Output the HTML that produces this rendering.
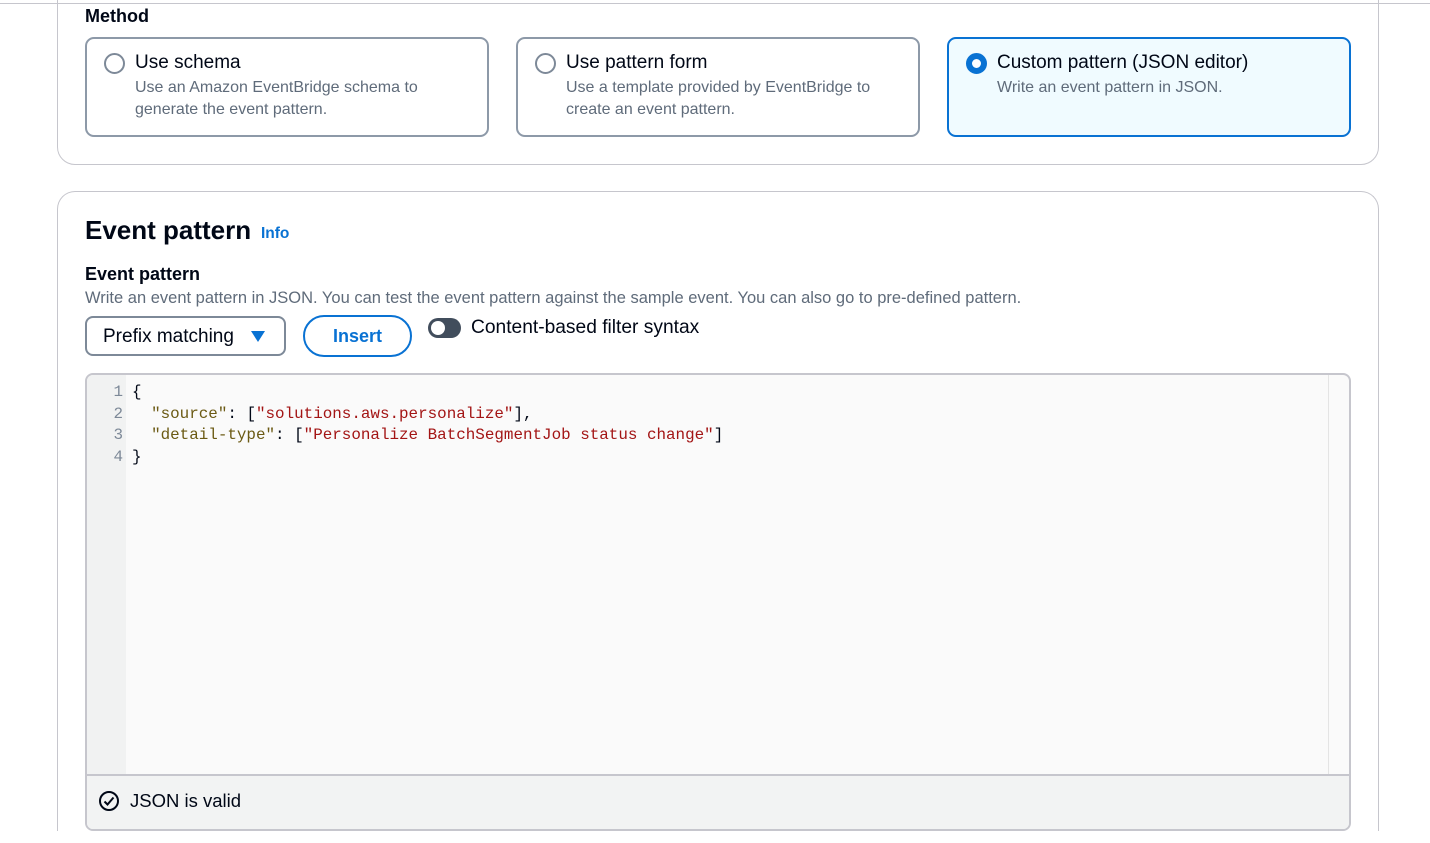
<!DOCTYPE html>
<html><head><meta charset="utf-8"><style>
*{box-sizing:border-box;margin:0;padding:0}
html{height:843px;overflow:hidden}
body{width:1430px;height:843px;overflow:hidden;background:#fff;font-family:"Liberation Sans",sans-serif;color:#000716;position:relative}
.a{position:absolute}
.card{position:absolute;border:2px solid #8d99a8;border-radius:9px;background:#fff}
.card.sel{border-color:#0972d3;background:#f0fbff}
.rad{position:absolute;left:17px;top:14px;width:21px;height:21px;border-radius:50%;border:2px solid #7d8998;background:#fff}
.sel .rad{border:6px solid #0972d3}
.t{position:absolute;left:48px;top:13px;font-size:19px;white-space:nowrap}
.d{position:absolute;left:48px;top:38px;font-size:16px;color:#5f6b7a;line-height:21.5px;white-space:nowrap}
.code{font-family:"Liberation Mono",monospace;font-size:15.9px;line-height:21.5px;white-space:pre}
.k{color:#6b5a14}.s{color:#a31515}
</style></head><body>
<div class="a" style="left:0;top:3px;width:1430px;height:1px;background:#c6c6cd"></div>
<div class="a" style="left:57px;top:-20px;width:1322px;height:185px;border:1px solid #c6c6cd;border-radius:18px"></div>
<div class="a" style="left:85px;top:6px;font-size:18px;font-weight:bold">Method</div>
<div class="card" style="left:85px;top:37px;width:404px;height:100px"><div class="rad"></div><div class="t">Use schema</div><div class="d">Use an Amazon EventBridge schema to<br>generate the event pattern.</div></div>
<div class="card" style="left:516px;top:37px;width:404px;height:100px"><div class="rad"></div><div class="t">Use pattern form</div><div class="d">Use a template provided by EventBridge to<br>create an event pattern.</div></div>
<div class="card sel" style="left:947px;top:37px;width:404px;height:100px"><div class="rad"></div><div class="t">Custom pattern (JSON editor)</div><div class="d">Write an event pattern in JSON.</div></div>

<div class="a" style="left:57px;top:191px;width:1322px;height:640px;border:1px solid #c6c6cd;border-bottom:none;border-radius:18px 18px 0 0"></div>
<div class="a" style="left:85px;top:215px;font-size:26px;font-weight:bold">Event pattern</div>
<div class="a" style="left:261px;top:225px;font-size:15.5px;font-weight:bold;color:#0972d3">Info</div>
<div class="a" style="left:85px;top:264px;font-size:18px;font-weight:bold">Event pattern</div>
<div class="a" style="left:85px;top:289px;font-size:16.5px;color:#5f6b7a;white-space:nowrap">Write an event pattern in JSON. You can test the event pattern against the sample event. You can also go to pre-defined pattern.</div>
<div class="a" style="left:85px;top:316px;width:201px;height:40px;border:2px solid #7d8998;border-radius:8px"><div class="a" style="left:16px;top:8px;font-size:19px;white-space:nowrap">Prefix matching</div><div class="a" style="left:164px;top:13px;width:0;height:0;border-left:7px solid transparent;border-right:7px solid transparent;border-top:11px solid #0972d3"></div></div>
<div class="a" style="left:303px;top:315px;width:109px;height:42px;border:2px solid #0972d3;border-radius:21px;color:#0972d3;font-weight:bold;font-size:18px;text-align:center;line-height:38px">Insert</div>
<div class="a" style="left:428px;top:318px;width:33px;height:20px;border-radius:10px;background:#414d5c"><div class="a" style="left:3px;top:3px;width:14px;height:14px;border-radius:50%;background:#fff"></div></div>
<div class="a" style="left:471px;top:317px;font-size:19.2px;white-space:nowrap">Content-based filter syntax</div>

<div class="a" style="left:85px;top:373px;width:1266px;height:458px;border:2px solid #c6c6cd;border-radius:8px;overflow:hidden;background:#fafafa">
 <div class="a" style="left:0;top:0;width:39px;height:400px;background:#f1f2f2"></div>
 <div class="a" style="left:1241px;top:0;width:1px;height:400px;background:#e4e4e4"></div>
 <div class="a code" style="left:0;top:7px;width:36px;text-align:right;color:#7d8998">1
2
3
4</div>
 <div class="a code" style="left:45px;top:7px">{
  <span class="k">"source"</span>: [<span class="s">"solutions.aws.personalize"</span>],
  <span class="k">"detail-type"</span>: [<span class="s">"Personalize BatchSegmentJob status change"</span>]
}</div>
 <div class="a" style="left:0;top:399px;width:1266px;height:60px;background:#f2f3f3;border-top:2px solid #c6c6cd">
  <svg class="a" style="left:11px;top:14px" width="22" height="22" viewBox="0 0 22 22"><circle cx="11" cy="11" r="9" fill="none" stroke="#000716" stroke-width="2"/><path d="M6.5 11.5l3 3 6-7" fill="none" stroke="#000716" stroke-width="2"/></svg>
  <div class="a" style="left:43px;top:14px;font-size:18.5px">JSON is valid</div>
 </div>
</div>
</body></html>
